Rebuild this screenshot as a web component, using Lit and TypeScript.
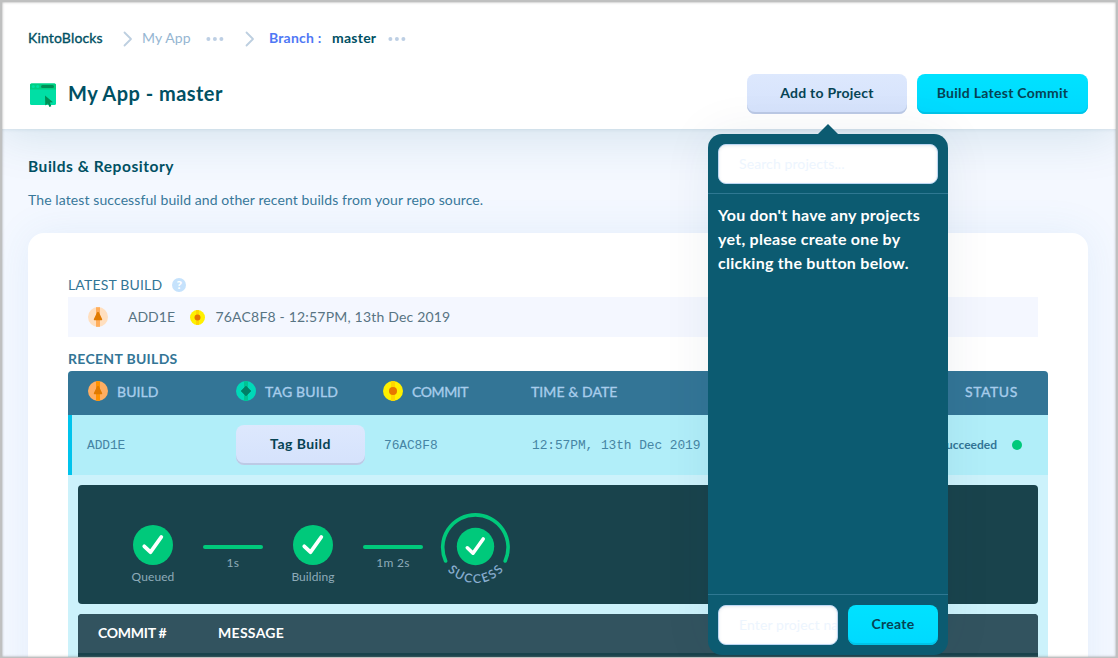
import { LitElement, html, css, svg } from "lit";
import { customElement, property } from "lit/decorators.js";

@customElement("kb-badge")
class KbBadge extends LitElement {
  @property() kind = "build";
  @property({ type: Boolean }) pale = false;
  @property({ type: Number }) size = 20;
  static styles = css`
    :host { display: flex; flex: none; }
    svg { display: block; }
  `;
  render() {
    const tones: Record<string, string[]> = {
      build: this.pale ? ["#ffdfbf", "#ffae5c", "#e07a00"] : ["#ffae62", "#ff9200", "#e07a00"],
      tag: ["#00d8b8", "#00c393", "#007f66"],
      commit: ["#fff000", "#ffd500", "#e67600"],
    };
    const [disc, band, mark] = tones[this.kind];
    const shape =
      this.kind === "build"
        ? svg`<path d="M10 4.8 Q11.3 5.2 11.7 7 L14.1 12 Q14.6 13.2 13.4 13.2 H6.6 Q5.4 13.2 5.900 12 L8.300 7 Q8.700 5.200 10 4.800Z" fill=${mark}/>`
        : this.kind === "tag"
        ? svg`<path d="M10 5 L15 10 L10 15 L5 10Z" fill=${mark} stroke=${mark} stroke-width="0.6" stroke-linejoin="round"/>`
        : svg`<circle cx="10" cy="10" r="4" fill=${mark}/>`;
    return html`<svg width=${this.size} height=${this.size} viewBox="0 0 20 20">
      <circle cx="10" cy="10" r="10" fill=${disc}/>
      <rect x="8" y="0.2" width="4" height="19.6" fill=${band}/>${shape}
    </svg>`;
  }
}

@customElement("kb-check")
class KbCheck extends LitElement {
  @property({ type: Number }) size = 40;
  static styles = css`
    :host { display: flex; flex: none; }
    svg { display: block; }
  `;
  render() {
    return html`<svg width=${this.size} height=${this.size} viewBox="0 0 40 40">
      <circle cx="20" cy="20" r="20" fill="#00c97b"/>
      <path d="M11.3 21.3 L17.5 27.2 L28.3 12" fill="none" stroke="#fff" stroke-width="3.8" stroke-linecap="round" stroke-linejoin="round"/>
    </svg>`;
  }
}

const chevron = html`<svg class="chev" width="10" height="16" viewBox="0 0 10 16">
  <path d="M1.5 1.5 L8 8 L1.5 14.5" fill="none" stroke="#bdcfe0" stroke-width="1.8" stroke-linejoin="round" stroke-linecap="round"/>
</svg>`;
const dots = html`<svg class="dots" width="18" height="4" viewBox="0 0 18 4" fill="#bdcfe4">
  <circle cx="2.4" cy="2" r="2"/><circle cx="8.9" cy="2" r="2"/><circle cx="15.4" cy="2" r="2"/>
</svg>`;

@customElement("app-root")
class AppRoot extends LitElement {
  static styles = css`
    :host {
      display: block; position: relative; height: 100vh; overflow: hidden;
      background: #f4f8ff; font-family: Lato, "Noto Sans", sans-serif; font-size: 14px; color: #005063;
    }
    * { box-sizing: border-box; }
    .frame {
      position: absolute; inset: 0; z-index: 20; pointer-events: none;
      border: 2px solid #bfc0c0; border-bottom-width: 1px;
      box-shadow: inset 0 0 2px 0.5px rgba(120, 120, 120, 0.5);
    }
    header {
      position: relative; height: 129px; padding: 28px 30px 0 28px; background: #fff;
      box-shadow: 0 0 4px rgba(0, 80, 99, 0.14), 0 6px 50px rgba(0, 90, 120, 0.14);
    }
    .crumbs { display: flex; align-items: center; height: 20px; line-height: 20px; white-space: nowrap; }
    .chev { margin: 1px 9px 0 20px; }
    .dots { margin: 1px 21px 0 16px; }
    .kb { -webkit-text-stroke: 0.35px; letter-spacing: 0.16px; width: 75px; }
    .app { color: #95b6d2; letter-spacing: 0.12px; width: 48px; }
    .chev.second { margin: 1px 14px 0 0; }
    .branch { color: #4f78f5; font-weight: 700; letter-spacing: 0.2px; width: 63px; }
    .master { font-weight: 700; letter-spacing: 0.25px; width: 45px; }
    .crumbs .last { display: flex; margin-left: -5px; }
    .titlebar { display: flex; align-items: center; height: 40px; margin-top: 26px; gap: 10px; }
    .titlebar h1 { flex: 1; margin: 0 0 2px 2px; font-size: 20px; line-height: 28px; font-weight: 700; letter-spacing: 0.47px; }
    .btn {
      display: flex; align-items: center; justify-content: center; height: 40px; border-radius: 8px;
      color: #064354; font-weight: 700; white-space: nowrap; padding-bottom: 3px; letter-spacing: 0.25px;
    }
    .soft { background: linear-gradient(#dde8fd, #d5e2fc); box-shadow: inset 0 -2px #bccae5; }
    .cyan { background: linear-gradient(#00e2ff, #00d9ff); box-shadow: inset 0 -2px #00c4e8; }
    .add { width: 160px; }
    .latest-btn { width: 171px; letter-spacing: 0.28px; }
    main { padding: 27px 30px 0 28px; }
    h2 { margin: 0; font-size: 15.5px; line-height: 20px; font-weight: 700; letter-spacing: 0.54px; }
    .sub { margin: 14px 0 0; line-height: 20px; color: #38789a; letter-spacing: 0.1px; }
    .card {
      height: 560px; margin-top: 23px; padding: 42px 40px 0; background: #fff; border-radius: 16px;
      box-shadow: 0 0 40px rgba(60, 130, 210, 0.09);
    }
    .label { display: flex; align-items: center; gap: 10px; height: 20px; line-height: 20px; color: #337596; white-space: nowrap; }
    .lb { letter-spacing: 0.17px; }
    .help {
      display: flex; align-items: center; justify-content: center; width: 14px; height: 14px;
      border-radius: 50%; background: #c5e2fc; color: #fff; font-weight: 900; font-size: 12px;
    }
    .latest {
      display: flex; align-items: center; width: 970px; height: 40px; margin: 2px 0 12px; padding-left: 20px;
      background: #f4f7ff; color: #587483;
    }
    .latest .id { width: 62px; margin-left: 20px; padding-bottom: 1px; }
    .latest .what { margin-left: 10.5px; padding-bottom: 1px; letter-spacing: 0.19px; }
    .recent { font-weight: 700; letter-spacing: 0.3px; }
    .table { width: 980px; margin-top: 2px; border-radius: 4px 4px 0 0; overflow: hidden; background: #ccf2fb; height: 420px; }
    .row { display: grid; grid-template-columns: 148px 147px 148px 434px auto; align-items: center; }
    .head { height: 44px; padding-left: 20px; padding-bottom: 4px; background: #337596; color: #a8cdec; }
    .head span { display: flex; align-items: center; gap: 9px; white-space: nowrap; }
    .head i { font-style: normal; -webkit-text-stroke: 0.35px; letter-spacing: 0.08px; padding-top: 1px; }
    .head .tight { letter-spacing: -0.4px; }
    .head .tagged { letter-spacing: 0.2px; }
    .head .wide { letter-spacing: 0.55px; }
    .body { height: 60px; padding-left: 15px; border-left: 4px solid #00c3ec; background: #b1eef9; color: #4685a4;
      grid-template-columns: 149px 148px 148px auto; }
    .mono { font-family: "Liberation Mono", monospace; font-size: 12.9px; white-space: nowrap; letter-spacing: -0.08px; }
    .tag { width: 129px; height: 40px; letter-spacing: 0.45px; }
    .state { display: flex; align-items: center; justify-content: space-between; padding-right: 26px; }
    .state b { display: flex; align-items: center; gap: 15px; font-size: 12px; line-height: 14px; color: #337596; }
    .dot { width: 10px; height: 10px; border-radius: 50%; background: #00c97b; }
    .pipe {
      display: flex; width: 960px; height: 119px; margin: 10px; padding-left: 45px; border-radius: 4px; background: #19434c;
      color: #8eabb9; font-size: 12px;
    }
    .step { display: flex; flex-direction: column; align-items: center; width: 60px; padding-top: 40px; gap: 4px; line-height: 16px; letter-spacing: 0.08px; }
    .link { display: flex; flex-direction: column; align-items: center; width: 60px; margin: 60px 20px 0; line-height: 16px; gap: 6px; letter-spacing: 0.3px; }
    .link i { width: 60px; height: 4px; border-radius: 2px; background: #00c97b; }
    .done { margin: 22px 0 0 -10px; width: 84px; height: 84px; display: block; }
    .commits { width: 960px; height: 160px; margin: 0 10px; border-radius: 4px; overflow: hidden; background: #19434c; }
    .commits div { display: grid; grid-template-columns: 120px auto; align-items: center; height: 39px; padding: 0 0 2px 20px; background: #32535f; color: #fff; font-weight: 700; }
    .commits .message { letter-spacing: 0.3px; }
    .commits .number { letter-spacing: -0.25px; }
    .pop {
      position: absolute; z-index: 10; left: 708px; top: 134px; width: 240px; height: 521px; border-radius: 14px;
      background: #0c5b71; display: flex; flex-direction: column; box-shadow: 0 0 50px rgba(0, 60, 80, 0.07);
    }
    .pop::before {
      content: ""; position: absolute; left: 109px; top: -10px; border: 11px solid transparent; border-top: 0; border-bottom: 11px solid #0c5b71;
    }
    .find { height: 60px; padding: 10px; border-bottom: 1px solid #2f7892; }
    .field {
      height: 40px; background: #fff; border: 1px solid #bcd6f2; border-radius: 8px; color: #edf5fe; padding-left: 20px;
      line-height: 38px; white-space: nowrap; overflow: hidden; letter-spacing: 0.1px; box-shadow: inset 0 1px 3px rgba(90, 120, 150, 0.15);
    }
    .msg { flex: 1; margin: 0; padding: 9px 10px; color: #fff; font-size: 16px; line-height: 24px; font-weight: 700; white-space: nowrap; letter-spacing: 0.27px; }
    .new { display: grid; grid-template-columns: 120px 90px; gap: 10px; height: 61px; padding: 10px; border-top: 1px solid #2f7892; }
  `;

  render() {
    return html`
      <header>
        <nav class="crumbs">
          <span class="kb">KintoBlocks</span>${chevron}
          <span class="app">My App</span>${dots}
          <svg class="chev second" width="10" height="16" viewBox="0 0 10 16"><path d="M1.5 1.5 L8 8 L1.5 14.5" fill="none" stroke="#bdcfe0" stroke-width="1.8" stroke-linejoin="round" stroke-linecap="round"/></svg>
          <span class="branch">Branch :</span><span class="master">master</span><span class="last">${dots}</span>
        </nav>
        <div class="titlebar">
          <svg width="28" height="28" viewBox="0 0 28 28">
            <rect x="2" y="3.5" width="26" height="21.5" rx="1.5" fill="#00dfa5"/>
            <path d="M2 9.5V5q0-1.500 1.500-1.500h23q1.500 0 1.500 1.500v4.500z" fill="#00cf82"/>
            <circle cx="5.300" cy="6.500" r="1.500" fill="#00dfa5"/><circle cx="9.700" cy="6.500" r="1.500" fill="#00dfa5"/>
            <rect x="13" y="5" width="13" height="3" rx="1.500" fill="#008f56"/>
            <path d="M17 15.500 L25 22.200 L21.900 22.500 L23.300 26.200 L21.400 27 L19.900 23.400 L17.300 25.500Z" fill="#008f56"/>
          </svg>
          <h1>My App - master</h1>
          <div class="btn soft add">Add to Project</div>
          <div class="btn cyan latest-btn">Build Latest Commit</div>
        </div>
      </header>
      <main>
        <h2>Builds &amp; Repository</h2>
        <p class="sub">The latest successful build and other recent builds from your repo source.</p>
        <section class="card">
          <div class="label"><span class="lb">LATEST BUILD</span><span class="help">?</span></div>
          <div class="latest">
            <kb-badge pale></kb-badge><span class="id">ADD1E</span>
            <kb-badge kind="commit" size="15"></kb-badge><span class="what">76AC8F8 - 12:57PM, 13th Dec 2019</span>
          </div>
          <div class="label recent">RECENT BUILDS</div>
          <div class="table">
            <div class="row head">
              <span><kb-badge></kb-badge><i>BUILD</i></span>
              <span><kb-badge kind="tag"></kb-badge><i class="tagged">TAG BUILD</i></span>
              <span><kb-badge kind="commit"></kb-badge><i class="tight">COMMIT</i></span>
              <span><i>TIME &amp; DATE</i></span>
              <span><i class="wide">STATUS</i></span>
            </div>
            <div class="row body">
              <span class="mono">ADD1E</span>
              <div class="btn soft tag">Tag Build</div>
              <span class="mono">76AC8F8</span>
              <div class="state"><span class="mono">12:57PM, 13th Dec 2019</span><b>Succeeded<span class="dot"></span></b></div>
            </div>
            <div class="pipe">
              <div class="step"><kb-check></kb-check>Queued</div>
              <div class="link"><i></i>1s</div>
              <div class="step"><kb-check></kb-check>Building</div>
              <div class="link"><i></i>1m 2s</div>
              <svg class="done" viewBox="0 0 84 84">
                <path d="M12.600 54 A32.700 32.700 0 1 1 72.200 54" fill="none" stroke="#00c97b" stroke-width="3.600" stroke-linecap="round"/>
                <circle cx="42.500" cy="39.500" r="18.700" fill="#00c97b"/>
                <path d="M34.300 40.800 L40 46.200 L50.200 32" fill="none" stroke="#fff" stroke-width="3.600" stroke-linecap="round" stroke-linejoin="round"/>
                <path id="arc" d="M6 39.500 A36.500 36.500 0 0 0 79 39.500" fill="none"/>
                <text fill="#8fb3d6" stroke="#8fb3d6" stroke-width="0.200" font-size="12" letter-spacing="2"><textPath href="#arc" startOffset="51%" text-anchor="middle">SUCCESS</textPath></text>
              </svg>
            </div>
            <div class="commits"><div><span class="number">COMMIT #</span><span class="message">MESSAGE</span></div></div>
          </div>
        </section>
      </main>
      <aside class="pop">
        <div class="find"><div class="field">Search projects...</div></div>
        <p class="msg">You don't have any projects<br />yet, please create one by<br />clicking the button below.</p>
        <div class="new"><div class="field">Enter project name</div><div class="btn cyan">Create</div></div>
      </aside>
      <div class="frame"></div>
    `;
  }
}
